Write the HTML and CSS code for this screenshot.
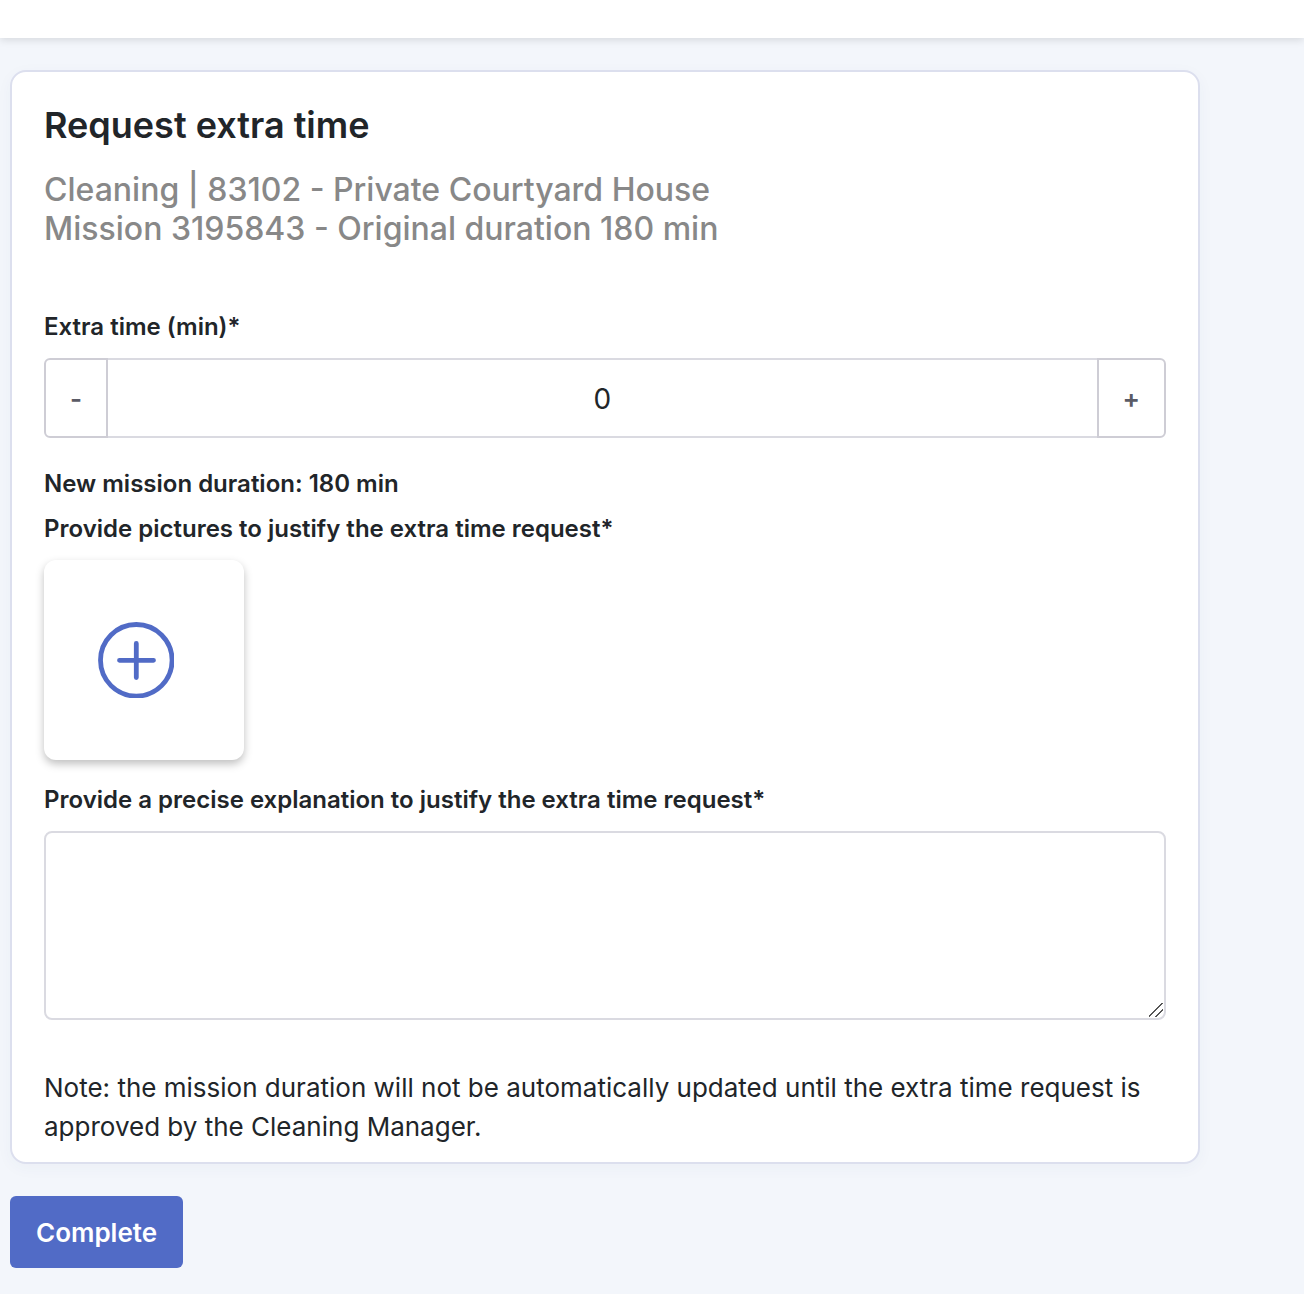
FILE: index.html
```html
<!DOCTYPE html>
<html lang="en">
<head>
    <meta charset="UTF-8">
    <meta name="viewport" content="width=device-width, initial-scale=1.0">
    <title>Request extra time</title>
    <link rel="stylesheet" href="styles.css">
</head>
<body>
    <header class="topbar"></header>

    <form class="request-form">
        <section class="card">
            <h1>Request extra time</h1>
            <h2>Cleaning | 83102 - Private Courtyard House<br>Mission 3195843 - Original duration 180 min</h2>

            <label class="label" for="extra-time">Extra time (min)*</label>
            <div class="stepper">
                <button type="button" class="step step-minus" onclick="changeTime(-15)">-</button>
                <input type="text" id="extra-time" class="step-value" inputmode="numeric" value="0" oninput="changeTime(0)">
                <button type="button" class="step step-plus" onclick="changeTime(15)">+</button>
            </div>

            <p class="label duration">New mission duration: <span id="new-duration">180</span> min</p>

            <p class="label" id="pictures-label">Provide pictures to justify the extra time request*</p>
            <button type="button" class="add-picture" aria-labelledby="pictures-label">
                <svg class="add-icon" viewBox="0 0 76 76" fill="none" stroke="currentColor">
                    <circle cx="38.300" cy="38.300" r="35.800" stroke-width="4.800"/>
                    <path d="M38.300 21.500V55.500M21.500 38.300H55.500" stroke-width="4.800" stroke-linecap="round"/>
                </svg>
            </button>

            <label class="label" for="explanation">Provide a precise explanation to justify the extra time request*</label>
            <textarea id="explanation" class="explanation"></textarea>

            <p class="note">Note: the mission duration will not be automatically updated until the extra time request is approved by the Cleaning Manager.</p>
        </section>

        <button type="button" class="complete">Complete</button>
    </form>

    <script>
        const originalDuration = 180;

        function changeTime(step) {
            const input = document.getElementById('extra-time');
            const value = Math.max(0, (parseInt(input.value, 10) || 0) + step);

            if (step !== 0) {
                input.value = value;
            }
            document.getElementById('new-duration').textContent = originalDuration + value;
        }
    </script>
</body>
</html>
```
FILE: styles.css
```css
* {
    box-sizing: border-box;
}

body {
    margin: 0;
    font-family: Inter, sans-serif;
    font-size: 26px;
    line-height: 39px;
    color: #212529;
    background-color: #f3f6fb;
}

button,
input,
textarea {
    font-family: inherit;
    color: inherit;
    margin: 0;
}

button {
    cursor: pointer;
}

.topbar {
    height: 38px;
    background-color: white;
    box-shadow: 0 2px 8px rgba(0, 0, 0, 0.12);
}

.request-form {
    padding: 32px 104px 26px 10px;
}

.card {
    padding: 32px 32px 16px;
    background-color: white;
    border: 2px solid #dcdfee;
    border-radius: 16px;
    box-shadow: 0 4px 16px rgba(60, 80, 130, 0.04);
}

h1 {
    margin: 0 0 24px;
    font-size: 36px;
    line-height: 42px;
    font-weight: 600;
}

h2 {
    margin: 0 0 61px;
    font-size: 32px;
    line-height: 39px;
    font-weight: 500;
    color: #888;
}

.label {
    display: block;
    margin: 0 0 13px;
    font-size: 24px;
    line-height: 36px;
    font-weight: 600;
}

.stepper {
    display: flex;
    height: 80px;
    margin-bottom: 28px;
}

.step {
    padding: 0 24px;
    border: 2px solid #cecdd5;
    background-color: white;
    color: #5a5b66;
    font-size: 26px;
    font-weight: 600;
    z-index: 1;
}

.step-minus {
    border-radius: 6px 0 0 6px;
}

.step-plus {
    border-radius: 0 6px 6px 0;
}

.step-value {
    flex: 1;
    min-width: 0;
    margin: 0 -2px;
    padding: 2px 0 0;
    border: 2px solid #dadae1;
    text-align: center;
    font-size: 28px;
}

.duration {
    margin-bottom: 9px;
}

.add-picture {
    display: block;
    width: 200px;
    height: 200px;
    margin-bottom: 22px;
    padding: 0 16px 0 0;
    border: none;
    border-radius: 12px;
    background-color: white;
    color: #516bc6;
    box-shadow: 0 4px 8px rgba(0, 0, 0, 0.25);
}

.add-icon {
    display: block;
    width: 76px;
    height: 76px;
    margin: 0 auto;
}

.explanation {
    display: block;
    width: 100%;
    height: 189px;
    margin-bottom: 48px;
    padding: 12px 24px;
    border: 2px solid #dadae1;
    border-radius: 8px;
    font-size: 26px;
    resize: vertical;
}

/* two diagonal grip lines */
.explanation::-webkit-resizer {
    background: linear-gradient(135deg, transparent 43%, #555 45%, #555 50%, transparent 52%, transparent 69%, #555 71%, #555 76%, transparent 78%) no-repeat 0 0 / 14px 14px;
}

.note {
    margin: 0;
}

.complete {
    display: block;
    height: 72px;
    margin-top: 32px;
    padding: 0 26px;
    border: none;
    border-radius: 6px;
    background-color: #516bc6;
    color: white;
    font-size: 26px;
    font-weight: 600;
}
```
